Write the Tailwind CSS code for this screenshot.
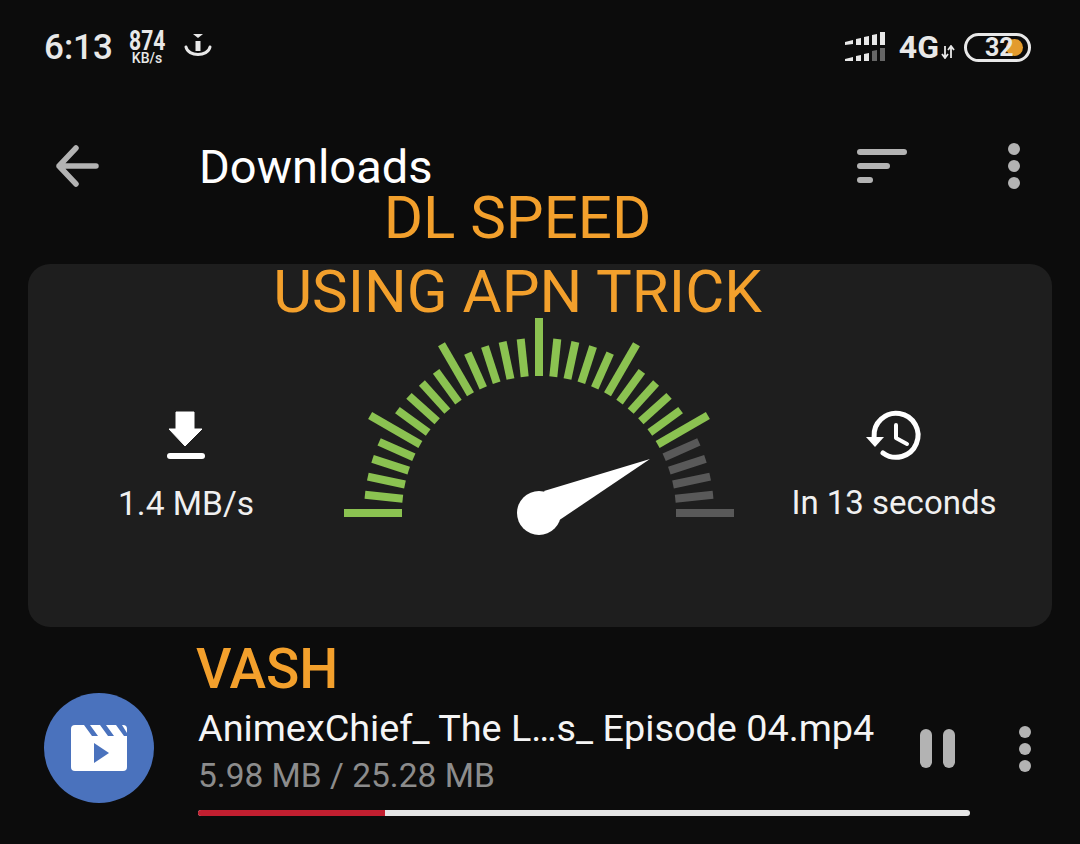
<!DOCTYPE html>
<html lang="en">
<head>
  <meta charset="UTF-8" />
  <title>Downloads</title>
  <script src="https://cdn.jsdelivr.net/npm/@tailwindcss/browser@4"></script>
</head>
<body class="bg-[#0c0c0c] font-['Roboto',sans-serif] text-white">
  <div class="relative w-[1080px] h-[844px] overflow-hidden">

    <!-- status bar -->
    <div class="h-[94px] flex items-center pl-[44px] pr-[49px] text-[#e8e8e8]">
      <span class="text-[35px] font-medium leading-none w-[85px]">6:13</span>
      <div class="flex flex-col items-center w-[36px] leading-none">
        <span class="text-[27px] font-bold leading-[22px] scale-x-[0.78]">874</span>
        <span class="text-[14px] font-medium leading-[13px]">KB/s</span>
      </div>
      <svg class="ml-[18px] w-[30px] h-[30px]" viewBox="0 0 30 30">
        <path d="M10 2h10l-5 4z" fill="#e8e8e8" />
        <rect x="12.500" y="9" width="5" height="10" fill="#e8e8e8" />
        <path d="M3 15c2 10 22 10 24 0" fill="none" stroke="#e8e8e8" stroke-width="3" stroke-linecap="round" />
      </svg>
      <div class="ml-auto flex items-center">
        <svg class="w-[40px] h-[30px]" viewBox="0 0 40 30">
          <g fill="#e8e8e8">
            <path d="M0 10l8-2v4l-8 1zM11 7l5-1v7h-5zM19 5l5-1v9h-5zM27 3l5-1v11h-5zM35 0h5v13h-5z" />
            <path d="M0 27l8-2v4H0zM11 24l5-1v6h-5zM19 22l5-1v8h-5z" />
          </g>
          <path d="M27 19l5-1v11h-5zM35 16h5v13h-5z" fill="#666" />
        </svg>
        <span class="ml-[14px] text-[32px] font-bold leading-none">4G</span>
        <svg class="ml-[2px] mt-[10px] w-[14px] h-[14px]" viewBox="0 0 14 14">
          <path d="M4 1v11M1 9l3 4 3-4M10 13V2M7 5l3-4 3 4" fill="none" stroke="#e8e8e8" stroke-width="1.800" />
        </svg>
        <div class="relative ml-[9px] w-[67px] h-[29px] rounded-full border-[3px] border-[#e8e8e8] bg-[#0c0c0c] flex items-center overflow-hidden">
          <span class="absolute right-[5px] top-[3px] w-[17px] h-[17px] rounded-full bg-[#e39b2d]"></span>
          <span class="relative pl-[18px] text-[25px] font-bold leading-none">32</span>
        </div>
      </div>
    </div>

    <!-- toolbar -->
    <div class="h-[144px] flex items-center">
      <svg class="ml-[54px] w-[48px] h-[48px]" viewBox="0 0 48 48">
        <path d="M42 24H5M22 6L5 24l17 18" fill="none" stroke="#b3b3b3" stroke-width="5.500" stroke-linecap="round" stroke-linejoin="round" />
      </svg>
      <h1 class="ml-[97px] text-[47px] leading-none font-normal text-white">Downloads</h1>
      <div class="ml-auto flex flex-col gap-[8px] w-[50px]">
        <span class="block h-[6px] w-[50px] rounded-full bg-[#b3b3b3]"></span>
        <span class="block h-[6px] w-[33px] rounded-full bg-[#b3b3b3]"></span>
        <span class="block h-[6px] w-[16px] rounded-full bg-[#b3b3b3]"></span>
      </div>
      <div class="ml-[101px] mr-[60px] flex flex-col gap-[5px]">
        <span class="block w-[12px] h-[12px] rounded-full bg-[#b3b3b3]"></span>
        <span class="block w-[12px] h-[12px] rounded-full bg-[#b3b3b3]"></span>
        <span class="block w-[12px] h-[12px] rounded-full bg-[#b3b3b3]"></span>
      </div>
    </div>

    <!-- speed card -->
    <div class="mt-[26px] mx-[28px] h-[363px] rounded-[22px] bg-[#1e1e1e] grid grid-cols-[316px_392px_316px]">
      <div class="flex flex-col items-center pt-[147px]">
        <svg class="w-[40px] h-[50px]" viewBox="0 0 40 50">
          <path d="M10 1h18v17h8L19 35 3 18h7z" fill="#fff" stroke="#fff" stroke-linejoin="round" />
          <rect x="1" y="42" width="38" height="6" rx="3" fill="#fff" />
        </svg>
        <span class="mt-[26px] text-[33.500px] leading-none text-[#f0f0f0]">1.4 MB/s</span>
      </div>
      <div class="pt-[50px]">
        <svg id="gauge" class="w-[392px] h-[226px]" viewBox="0 0 392 226">
          <path d="M306 145L200 177 214 207z" fill="#fff" />
          <circle cx="195" cy="199" r="22" fill="#fff" />
        </svg>
      </div>
      <div class="flex flex-col items-center pt-[143px]">
        <svg class="w-[60px] h-[56px]" viewBox="0 0 60 56">
          <path d="M10.100 30A22 22 0 1 1 19 46" fill="none" stroke="#fff" stroke-width="5" stroke-linecap="round" />
          <path d="M2 30h18l-9 10z" fill="#fff" />
          <path d="M32 18v13l11 6" fill="none" stroke="#fff" stroke-width="4" stroke-linecap="round" stroke-linejoin="round" />
        </svg>
        <span class="mt-[23px] text-[33px] leading-none text-[#f0f0f0]">In 13 seconds</span>
      </div>
    </div>

    <!-- download row -->
    <div class="mt-[66px] flex items-start">
      <div class="ml-[44px] w-[110px] h-[110px] rounded-full bg-[#4a72bd] flex items-center justify-center">
        <svg class="w-[56px] h-[46px]" viewBox="0 0 56 46">
          <rect width="56" height="46" rx="4" fill="#fff" />
          <path d="M13 0h6l8 11h-6zM29 0h6l8 11h-6zM45 0h6l5 8v3h-3z" fill="#4a72bd" />
          <path d="M23 18l15 10-15 10z" fill="#4a72bd" />
        </svg>
      </div>
      <div class="ml-[44px] w-[772px]">
        <p class="text-[37.800px] leading-[44px] mt-[13px] text-[#f5f5f5] whitespace-nowrap">AnimexChief_ The L…s_ Episode 04.mp4</p>
        <p class="text-[33.500px] leading-[40px] mt-[6px] text-[#8c8c8c] whitespace-nowrap">5.98 MB / 25.28 MB</p>
        <div class="mt-[14px] h-[6px] rounded-full bg-[#e6e6e6] overflow-hidden">
          <div class="h-full w-[187px] bg-[#c21f30]"></div>
        </div>
      </div>
      <div class="ml-[-50px] mt-[36px] flex gap-[11px]">
        <span class="block w-[12px] h-[39px] rounded-full bg-[#b3b3b3]"></span>
        <span class="block w-[12px] h-[39px] rounded-full bg-[#b3b3b3]"></span>
      </div>
      <div class="ml-[64px] mt-[33px] flex flex-col gap-[5px]">
        <span class="block w-[12px] h-[12px] rounded-full bg-[#b3b3b3]"></span>
        <span class="block w-[12px] h-[12px] rounded-full bg-[#b3b3b3]"></span>
        <span class="block w-[12px] h-[12px] rounded-full bg-[#b3b3b3]"></span>
      </div>
    </div>

    <!-- captions pasted over the screenshot -->
    <div class="absolute left-0 w-[1035px] top-[181px] text-center text-[#f3a02c] text-[60px] leading-[74px]">
      <p>DL SPEED</p>
      <p>USING APN TRICK</p>
    </div>
    <p class="absolute left-[196px] top-[638px] font-medium text-[#f3a02c] text-[55px] leading-[62px]">VASH</p>
  </div>

  <script>
    // gauge ticks, 6deg apart, every fifth one is long
    const gauge = document.getElementById("gauge");
    const needle = gauge.firstElementChild;
    for (let i = 0; i <= 30; i++) {
      const a = (i * 6 * Math.PI) / 180;
      const outer = i % 5 === 0 ? 195 : 175;
      const line = document.createElementNS("http://www.w3.org/2000/svg", "line");
      line.setAttribute("x1", 195 - 137 * Math.cos(a));
      line.setAttribute("y1", 199 - 137 * Math.sin(a));
      line.setAttribute("x2", 195 - outer * Math.cos(a));
      line.setAttribute("y2", 199 - outer * Math.sin(a));
      line.setAttribute("stroke", i > 25 ? "#595959" : "#8bc251");
      line.setAttribute("stroke-width", "8");
      gauge.insertBefore(line, needle);
    }
  </script>
</body>
</html>
